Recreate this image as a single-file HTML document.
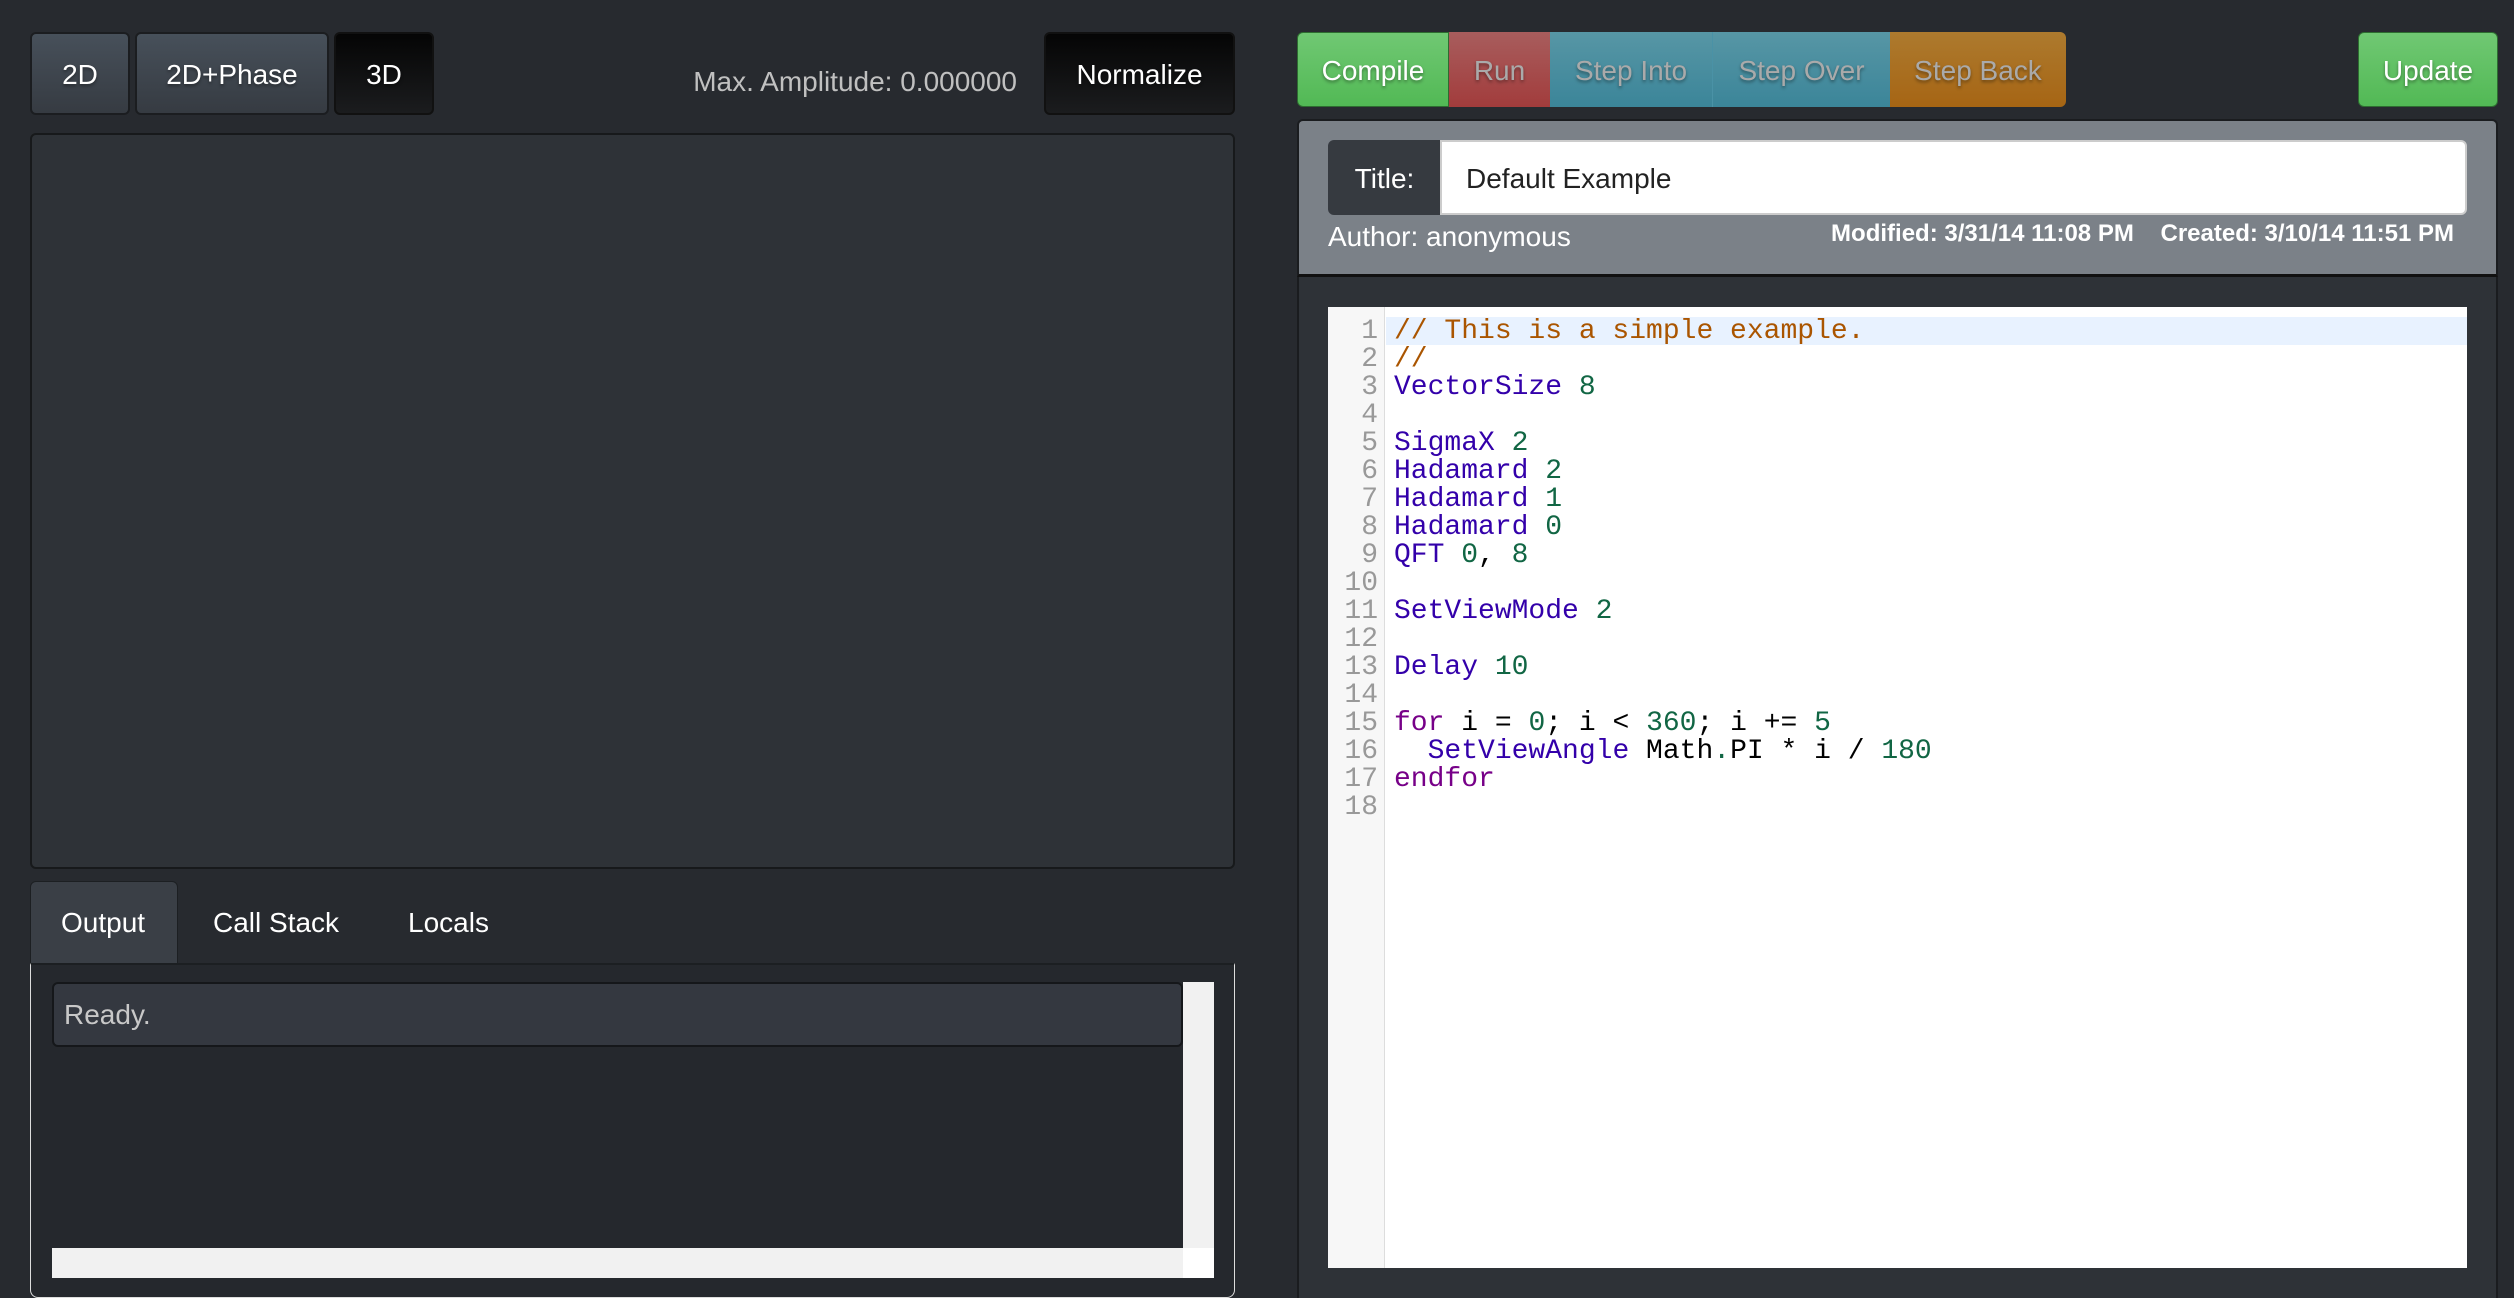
<!DOCTYPE html>
<html><head><meta charset="utf-8"><style>
*{box-sizing:border-box;margin:0;padding:0}
body{width:2514px;height:1298px;background:#272a2f;font-family:"Liberation Sans",sans-serif;position:relative;overflow:hidden;color:#fff}
.a{position:absolute}
.btn{position:absolute;display:flex;align-items:center;justify-content:center;font-size:28px;padding-top:3px;text-shadow:0 2px 3px rgba(0,0,0,.4)}
.g{background:linear-gradient(#47505a,#363b42);border:2px solid #1b1d20;border-radius:6px}
.blk{background:linear-gradient(#050505,#1b1c1e);border:2px solid #111;border-radius:6px}
.code{font-family:"Liberation Mono",monospace;font-size:28px;line-height:28px;white-space:pre}
.k{color:#3300aa}.n{color:#116644}.c{color:#aa5500}.f{color:#770088}.t{color:#000}
</style></head><body>
<div class="btn g" style="left:30px;top:32px;width:100px;height:83px">2D</div>
<div class="btn g" style="left:135px;top:32px;width:194px;height:83px">2D+Phase</div>
<div class="btn blk" style="left:334px;top:32px;width:100px;height:83px">3D</div>
<div class="a" style="left:660px;top:66px;width:357px;text-align:right;font-size:28px;color:#c0c0c0">Max. Amplitude: 0.000000</div>
<div class="btn blk" style="left:1044px;top:32px;width:191px;height:83px">Normalize</div>
<div class="a" style="left:30px;top:133px;width:1205px;height:736px;background:#2e3237;border:2px solid #17191b;border-radius:6px"></div>
<div class="a" style="left:30px;top:881px;width:148px;height:84px;background:#3a3f46;border-radius:6px 6px 0 0;border:1px solid #1c1f22"></div>
<div class="a" style="left:61px;top:907px;font-size:28px">Output</div>
<div class="a" style="left:213px;top:907px;font-size:28px">Call Stack</div>
<div class="a" style="left:408px;top:907px;font-size:28px">Locals</div>
<div class="a" style="left:30px;top:963px;width:1205px;height:335px;border:1px solid #ddd;border-top:2px solid #1c1f22;border-radius:0 0 8px 8px;background:#25282d"></div>
<div class="a" style="left:52px;top:982px;width:1131px;height:65px;background:#343840;border:2px solid #15171a;border-radius:6px"></div>
<div class="a" style="left:64px;top:999px;font-size:28px;color:#c8c8c8">Ready.</div>
<div class="a" style="left:1183px;top:982px;width:31px;height:296px;background:#f1f1f1"></div>
<div class="a" style="left:52px;top:1248px;width:1131px;height:30px;background:#f1f1f1"></div>
<div class="a" style="left:1183px;top:1248px;width:31px;height:30px;background:#fff"></div>

<div class="btn" style="left:1297px;top:32px;width:152px;height:75px;background:linear-gradient(#70c873,#52b955);border-radius:6px 0 0 6px;border:1px solid #2d6d30">Compile</div>
<div class="btn" style="left:1449px;top:32px;width:101px;height:75px;background:linear-gradient(#a85d5d,#a23c3c);color:#aaa">Run</div>
<div class="btn" style="left:1550px;top:32px;width:163px;height:75px;background:linear-gradient(#5796a5,#3b8599);color:#aaa;border-right:1px solid #4a92a6">Step Into</div>
<div class="btn" style="left:1713px;top:32px;width:177px;height:75px;background:linear-gradient(#5796a5,#3b8599);color:#aaa">Step Over</div>
<div class="btn" style="left:1890px;top:32px;width:176px;height:75px;background:linear-gradient(#ad7a2e,#a66514);color:#aaa;border-radius:0 6px 6px 0">Step Back</div>
<div class="btn" style="left:2358px;top:32px;width:140px;height:75px;background:linear-gradient(#70c873,#52b955);border-radius:6px;border:1px solid #2d6d30">Update</div>

<div class="a" style="left:1297px;top:119px;width:1201px;height:158px;background:#7b8188;border:2px solid #1a1c1f;border-bottom:3px solid #111;border-radius:6px 6px 0 0"></div>
<div class="a" style="left:1328px;top:140px;width:113px;height:75px;background:#363a40;border-radius:6px 0 0 6px;display:flex;align-items:center;justify-content:center;font-size:28px;padding-top:3px">Title:</div>
<div class="a" style="left:1440px;top:140px;width:1027px;height:75px;background:#fff;border:2px solid #ccc;border-radius:0 6px 6px 0;display:flex;align-items:center;padding-left:24px;padding-top:3px;font-size:28px;color:#222">Default Example</div>
<div class="a" style="left:1328px;top:221px;font-size:28px">Author: anonymous</div>
<div class="a" style="left:1650px;top:220px;width:804px;text-align:right;font-size:24px;font-weight:bold;white-space:pre">Modified: 3/31/14 11:08 PM    Created: 3/10/14 11:51 PM</div>
<div class="a" style="left:1297px;top:277px;width:1201px;height:1021px;background:#2e3237;border-left:2px solid #1a1c1f;border-right:2px solid #1a1c1f"></div>
<div class="a" style="left:1328px;top:307px;width:1139px;height:961px;background:#fff"></div>
<div class="a" style="left:1328px;top:307px;width:57px;height:961px;background:#f7f7f7;border-right:1px solid #ddd"></div>
<div class="a" style="left:1386px;top:317px;width:1081px;height:28px;background:#e8f2ff"></div>
<div class="a code" style="left:1328px;top:318px;width:50px;text-align:right;color:#999">1
2
3
4
5
6
7
8
9
10
11
12
13
14
15
16
17
18</div>
<div class="a code t" style="left:1394px;top:318px"><span class="c">// This is a simple example.</span>
<span class="c">//</span>
<span class="k">VectorSize</span> <span class="n">8</span>

<span class="k">SigmaX</span> <span class="n">2</span>
<span class="k">Hadamard</span> <span class="n">2</span>
<span class="k">Hadamard</span> <span class="n">1</span>
<span class="k">Hadamard</span> <span class="n">0</span>
<span class="k">QFT</span> <span class="n">0</span>, <span class="n">8</span>

<span class="k">SetViewMode</span> <span class="n">2</span>

<span class="k">Delay</span> <span class="n">10</span>

<span class="f">for</span> i = <span class="n">0</span>; i &lt; <span class="n">360</span>; i += <span class="n">5</span>
  <span class="k">SetViewAngle</span> Math<span class="n">.</span>PI * i / <span class="n">180</span>
<span class="f">endfor</span>
</div>
</body></html>
